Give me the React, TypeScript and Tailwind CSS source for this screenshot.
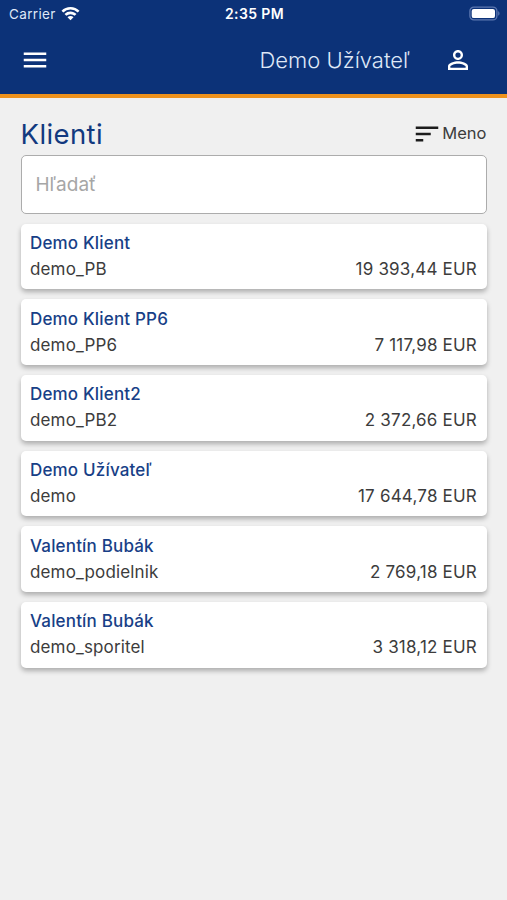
import { FC } from 'react';
import { MdMenu, MdPersonOutline, MdSort } from 'react-icons/md';

interface Client {
  name: string;
  login: string;
  balance: string;
}

const clients: Client[] = [
  { name: 'Demo Klient', login: 'demo_PB', balance: '19 393,44 EUR' },
  { name: 'Demo Klient PP6', login: 'demo_PP6', balance: '7 117,98 EUR' },
  { name: 'Demo Klient2', login: 'demo_PB2', balance: '2 372,66 EUR' },
  { name: 'Demo Užívateľ', login: 'demo', balance: '17 644,78 EUR' },
  { name: 'Valentín Bubák', login: 'demo_podielnik', balance: '2 769,18 EUR' },
  { name: 'Valentín Bubák', login: 'demo_sporitel', balance: '3 318,12 EUR' },
];

const WifiIcon: FC = () => (
  <svg className="w-[19px] h-[14px]" viewBox="0 0 19 14" fill="#fff">
    <path d="M9.5 0C13 0 16.2 1.4 18.5 3.7L16.7 5.5A10.2 10.2 0 0 0 2.3 5.5L.5 3.7A12.8 12.8 0 0 1 9.5 0Z" />
    <path d="M9.5 4.5C11.7 4.5 13.8 5.4 15.5 6.9L13.6 8.8A6 6 0 0 0 5.4 8.8L3.5 6.9A8.6 8.6 0 0 1 9.5 4.5Z" />
    <path d="M9.5 9C10.7 9 11.7 9.4 12.5 10.2L9.5 13.3L6.5 10.2C7.3 9.4 8.3 9 9.5 9Z" />
  </svg>
);

const BatteryIcon: FC = () => (
  <svg className="w-[31px] h-[16px]" viewBox="0 0 31 16" fill="none">
    <rect x="0.9" y="1.1" width="27" height="12.8" rx="4" stroke="#5d78b0" strokeWidth="1.3" />
    <rect x="2.7" y="2.9" width="23.3" height="9.2" rx="2.2" fill="#fff" />
    <path d="M29.2 5.3C30.1 5.7 30.5 6.5 30.5 7.5S30.1 9.3 29.2 9.7Z" fill="#5d78b0" />
  </svg>
);

const StatusBar: FC = () => (
  <div className="grid grid-cols-3 items-center h-7 pl-[9px] pr-[7px] text-[13.5px]">
    <div className="flex items-center gap-[5px] text-[#dfe8f7] tracking-[0.35px]">
      Carrier
      <WifiIcon />
    </div>
    <div className="pb-px text-center text-[14px] font-semibold tracking-[0.4px]">2:35 PM</div>
    <div className="flex justify-end">
      <BatteryIcon />
    </div>
  </div>
);

const ClientCard: FC<Client> = ({ name, login, balance }) => (
  <div className="h-[65.7px] shrink-0 rounded-[5px] bg-white px-[9.5px] pt-[6.5px] shadow-[0_3px_5px_rgba(0,0,0,0.28)]">
    <div className="text-[17px] leading-[26px] font-medium text-[#183f87] tracking-[0.17px]">{name}</div>
    <div className="flex justify-between text-[17px] leading-[26px] text-[#3c3c3c]">
      <span className="tracking-[0.15px]">{login}</span>
      <span className="tracking-[0.2px]">{balance}</span>
    </div>
  </div>
);

const App: FC = () => {
  return (
    <div className="min-h-screen bg-[#f0f0f0] font-[Inter,sans-serif]">
      <header className="h-[98px] bg-[#0c3278] border-b-4 border-[#ee921d] text-white">
        <StatusBar />
        <div className="flex items-center h-16 pl-5 pr-[34px]">
          <MdMenu className="w-[30px] h-[30px]" />
          <div className="ml-auto mr-[33px] text-[22px] font-light text-[#dfe8f7]">Demo Užívateľ</div>
          <MdPersonOutline className="w-[30px] h-[30px]" />
        </div>
      </header>

      <main className="px-[20.5px] pt-[17px]">
        <div className="flex items-center justify-between h-[39.5px]">
          <h1 className="text-[27.5px] text-[#12397f] tracking-[0.4px]">Klienti</h1>
          <button className="flex items-center -mt-[2px] text-[16.5px] text-[#3c3c3c]">
            <MdSort className="w-[30px] h-[30px] text-[#1c1c1c]" />
            Meno
          </button>
        </div>
        <input
          className="block w-full h-[59px] rounded-[5px] border-[1.5px] border-[#acacac] bg-white px-[14px] text-[19px] placeholder:text-[#a6a6a6]"
          placeholder="Hľadať"
        />
        <div className="flex flex-col gap-[10px] mt-[10px]">
          {clients.map((client) => (
            <ClientCard key={client.login} {...client} />
          ))}
        </div>
      </main>
    </div>
  );
};

export default App;
